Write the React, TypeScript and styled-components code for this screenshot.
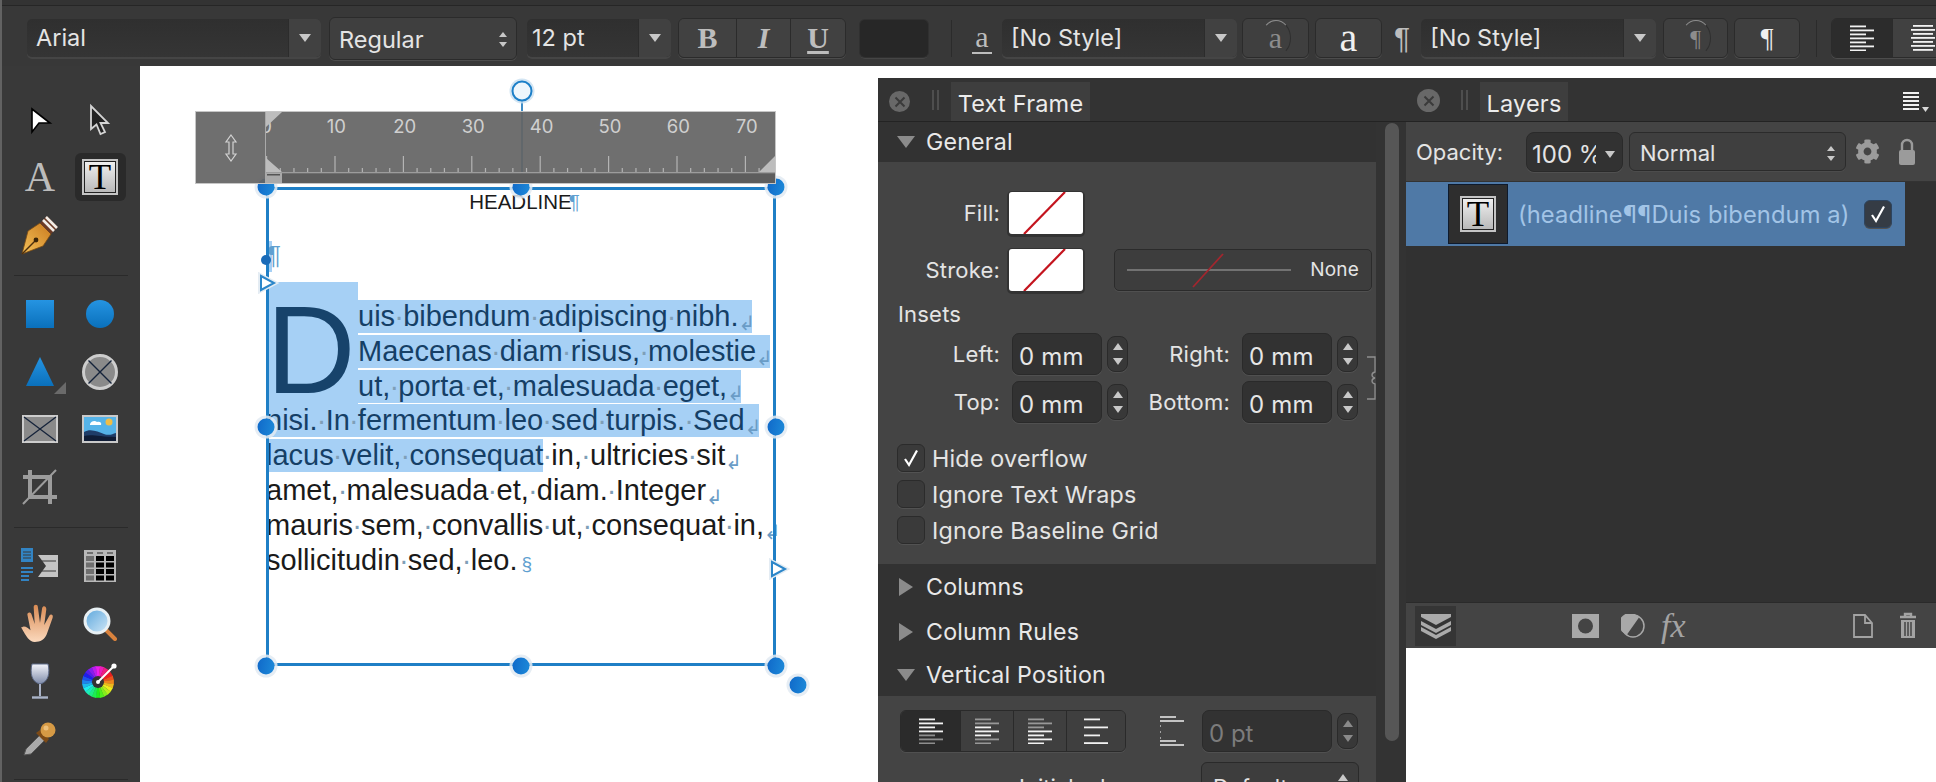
import * as React from 'react';
import styled, { createGlobalStyle } from 'styled-components';
import { FaCog } from 'react-icons/fa';

const GlobalStyle = createGlobalStyle`
  html, body {
    margin: 0;
    padding: 0;
    height: 100%;
    overflow: hidden;
    background: #fff;
  }
  * { box-sizing: border-box; }
`;

const UI_FONT = `Inter, "Noto Sans", "Liberation Sans", sans-serif`;
const ARIAL = `"Liberation Sans", Arial, sans-serif`;
const SERIF = `"Liberation Serif", "Times New Roman", serif`;

const Page = styled.div`
  width: 1936px;
  height: 782px;
  display: flex;
  flex-direction: column;
  overflow: hidden;
  border-left: 2px solid #626262;
  font-family: ${UI_FONT};
  color: #e4e4e4;
`;

/* ---------- top toolbar ---------- */

const Toolbar = styled.div`
  flex: 0 0 66px;
  display: flex;
  align-items: center;
  padding: 5px 0 0 25px;
  background: #383838;
  border-top: 5px solid #333;
  box-shadow: inset 0 1px 0 #262626;
  overflow: hidden;
  font-size: 23.5px;
`;

const Field = styled.div<{ $w: number; $ml?: number }>`
  flex: 0 0 ${p => p.$w}px;
  height: 38px;
  margin-left: ${p => p.$ml ?? 0}px;
  display: flex;
  align-items: stretch;
  background: linear-gradient(#2f2f2f, #353535);
  border-radius: 5px;
  box-shadow: 0 2px 0 #454545;
  overflow: hidden;
`;

const FieldText = styled.span<{ $pad?: number }>`
  flex: 1;
  padding: 2px 0 0 ${p => p.$pad ?? 9}px;
  line-height: 34px;
  white-space: nowrap;
`;

const Caret = styled.span`
  flex: 0 0 33px;
  display: flex;
  align-items: center;
  justify-content: center;
  background: #414141;
  border-left: 1px solid #2c2c2c;
`;

const Tri = styled.i<{ $dir: 'up' | 'down' | 'right'; $s: number; $c?: string }>`
  display: block;
  width: 0;
  height: 0;
  border-style: solid;
  border-color: transparent;
  ${p =>
    p.$dir === 'right'
      ? `border-width: ${p.$s}px 0 ${p.$s}px ${p.$s * 1.6}px; border-left-color: ${p.$c ?? '#c8c8c8'};`
      : p.$dir === 'up'
      ? `border-width: 0 ${p.$s}px ${p.$s * 1.4}px; border-bottom-color: ${p.$c ?? '#c8c8c8'};`
      : `border-width: ${p.$s * 1.4}px ${p.$s}px 0; border-top-color: ${p.$c ?? '#c8c8c8'};`}
`;

const SelectBox = styled.div<{ $w: number; $ml?: number }>`
  flex: 0 0 ${p => p.$w}px;
  height: 43px;
  margin-left: ${p => p.$ml ?? 0}px;
  display: flex;
  align-items: center;
  justify-content: space-between;
  padding: 2px 9px 0 9px;
  background: #3f3f3f;
  border: 1px solid #2b2b2b;
  border-radius: 6px;
  box-shadow: 0 1px 0 #4c4c4c;
  white-space: nowrap;
`;

const UpDown = styled.span`
  display: flex;
  flex-direction: column;
  gap: 5px;
`;

const BtnGroup = styled.div<{ $ml: number }>`
  display: flex;
  height: 40px;
  margin-left: ${p => p.$ml}px;
  border: 1px solid #2b2b2b;
  border-radius: 6px;
  box-shadow: 0 1px 0 #4c4c4c;
  overflow: hidden;
  flex: none;
`;

const GroupBtn = styled.span<{ $w: number; $on?: boolean; $font?: string }>`
  flex: 0 0 ${p => p.$w}px;
  display: flex;
  align-items: center;
  justify-content: center;
  background: ${p => (p.$on ? '#2c2c2c' : '#414141')};
  & + & { border-left: 1px solid #2b2b2b; }
  font-family: ${p => p.$font ?? UI_FONT};
`;

const StyleLetter = styled.span<{ $b?: boolean; $i?: boolean; $u?: boolean }>`
  font-size: 30px;
  color: #bdbdbd;
  font-weight: ${p => (p.$b ? 700 : 400)};
  font-style: ${p => (p.$i ? 'italic' : 'normal')};
  text-decoration: ${p => (p.$u ? 'underline' : 'none')};
  text-underline-offset: 3px;
`;

const ColorWell = styled.div`
  flex: 0 0 68px;
  height: 37px;
  margin-left: 14px;
  background: #272727;
  border-radius: 5px;
  box-shadow: 0 0 0 1px #303030, 0 2px 0 #454545;
`;

const VRule = styled.div<{ $ml: number }>`
  flex: 0 0 1px;
  height: 37px;
  margin-left: ${p => p.$ml}px;
  background: #2b2b2b;
`;

const ToolGlyph = styled.span<{ $ml: number; $w: number; $size: number; $u?: boolean; $font?: string; $c?: string }>`
  flex: 0 0 ${p => p.$w}px;
  margin-left: ${p => p.$ml}px;
  text-align: center;
  font-family: ${p => p.$font ?? SERIF};
  font-size: ${p => p.$size}px;
  line-height: 1;
  color: ${p => p.$c ?? '#bdbdbd'};
  border-bottom: ${p => (p.$u ? '2px solid #bdbdbd' : 'none')};
`;

const StyleBtn = styled.div<{ $w: number; $ml: number }>`
  flex: 0 0 ${p => p.$w}px;
  height: 40px;
  margin-left: ${p => p.$ml}px;
  display: flex;
  align-items: center;
  justify-content: center;
  position: relative;
  background: #3f3f3f;
  border: 1px solid #2b2b2b;
  border-radius: 6px;
  box-shadow: 0 1px 0 #4c4c4c;
  font-family: ${SERIF};
`;

const ClearMark = styled.span<{ $size: number; $dim?: boolean }>`
  font-size: ${p => p.$size}px;
  line-height: 1;
  color: ${p => (p.$dim ? '#8d8d8d' : '#f0f0f0')};
`;

const ClearRing = styled.span`
  position: absolute;
  left: 50%;
  top: 50%;
  width: 30px;
  height: 36px;
  transform: translate(-50%, -50%);
  border-radius: 50%;
  border: 1px solid transparent;
  border-top-color: #8d8d8d;
  border-right-color: #2f2f2f;
`;

/* ---------- main ---------- */

const Main = styled.div`
  flex: 1;
  display: flex;
  min-height: 0;
`;

const ToolRail = styled.div`
  flex: 0 0 138px;
  padding: 25px 8px 0;
  background: #393939;
`;

const ToolGrid = styled.div`
  display: grid;
  grid-template-columns: 60px 60px;
  grid-auto-rows: 57.5px;
  justify-items: center;
  align-items: center;
`;

const RailRule = styled.div`
  height: 1px;
  margin: 11.5px 4px 9.5px;
  background: #2a2a2a;
`;

const ActiveTool = styled.div`
  width: 51px;
  height: 48px;
  display: flex;
  align-items: center;
  justify-content: center;
  background: #2a2a2a;
  border-radius: 6px;
`;

const TextToolA = styled.span`
  font-family: ${SERIF};
  font-size: 42px;
  line-height: 1;
  color: #bcbcbc;
`;

const FrameGlyph = styled.div<{ $s: number }>`
  width: ${p => p.$s}px;
  height: ${p => p.$s}px;
  display: flex;
  align-items: center;
  justify-content: center;
  border: 2px solid #c4c4c4;
  box-shadow: inset 0 0 0 1px #222;
  background: linear-gradient(#f1f1f1, #b7b7b7);
  font-family: ${SERIF};
  font-size: ${p => p.$s * 1.02}px;
  line-height: 1;
  color: #000;
`;

const Canvas = styled.div`
  flex: 1;
  display: flex;
  background: #fff;
  overflow: hidden;
`;

const Artboard = styled.div`
  flex: 0 0 738px;
  position: relative;
`;

/* ruler and text frame sit on the free canvas */

const Ruler = styled.div`
  position: absolute;
  z-index: 3;
  left: 55px;
  top: 45px;
  width: 581px;
  height: 73px;
  display: flex;
  background: rgba(100, 100, 100, 0.93);
  border: 1px solid #c6c6c6;
`;

const RulerGrip = styled.div`
  flex: 0 0 70px;
  display: flex;
  align-items: center;
  justify-content: center;
  border-right: 1px solid #a9a9a9;
`;

const Frame = styled.div`
  position: absolute;
  left: 126px;
  top: 121px;
  width: 510px;
  height: 479px;
  font-family: ${ARIAL};
  color: #1a1a1a;
`;

const FrameEdge = styled.div`
  position: absolute;
  inset: 0;
  border: 3px solid #1f7fc6;
  pointer-events: none;
`;

const Handle = styled.span<{ $x: string; $y: string }>`
  position: absolute;
  z-index: 2;
  left: ${p => p.$x};
  top: ${p => p.$y};
  width: 17px;
  height: 17px;
  transform: translate(-50%, -50%);
  border-radius: 50%;
  background: linear-gradient(100deg, #1069c9, #1d8ad9);
  box-shadow: 0 0 0 3px rgba(226, 234, 242, 0.85);
`;

const SmallDot = styled.span`
  position: absolute;
  z-index: 2;
  left: -5px;
  top: 68px;
  width: 10px;
  height: 10px;
  border-radius: 50%;
  background: #1a6bb8;
`;

const Stem = styled.div`
  position: absolute;
  left: 255px;
  top: -96px;
  width: 1.5px;
  height: 96px;
  background: #3e8cc6;
`;

const RotateRing = styled.span`
  position: absolute;
  z-index: 4;
  left: 255.5px;
  top: -96px;
  width: 21px;
  height: 21px;
  transform: translate(-50%, -50%);
  border-radius: 50%;
  border: 2.5px solid #1c7fc8;
  background: #eef6fc;
  box-shadow: 0 0 0 2px rgba(200, 222, 240, 0.8);
`;

const Port = styled.svg<{ $x: number; $y: number }>`
  position: absolute;
  z-index: 2;
  left: ${p => p.$x}px;
  top: ${p => p.$y}px;
`;

const Headline = styled.div`
  height: 28px;
  padding: 1px 0 0 7px;
  text-align: center;
  font-size: 20.5px;
  line-height: 28px;
`;

const Pilcrow = styled.span`
  font-family: ${ARIAL};
  color: #5f9fd0;
`;

const HeadPilcrow = styled(Pilcrow)`
  margin-left: -3px;
`;

const EmptyPara = styled.div`
  width: 5px;
  height: 31px;
  margin: 26px 0 0 1px;
  background: #a6d0f5;
  white-space: nowrap;
  font-size: 26px;
  line-height: 28px;
`;

const Body = styled.div`
  position: relative;
  margin-top: 28px;
  font-size: 29px;
`;

const DropBack = styled.div`
  position: absolute;
  left: 0;
  top: -18px;
  width: 92px;
  height: 122px;
  background: #a6d0f5;
`;

const DropCap = styled.span`
  position: absolute;
  left: 0;
  top: -23px;
  font-size: 124px;
  line-height: 146px;
  color: #17436b;
`;

const TextLine = styled.div<{ $inset?: boolean }>`
  position: relative;
  height: 34.8px;
  line-height: 33px;
  margin-left: ${p => (p.$inset ? 92 : 0)}px;
  white-space: nowrap;
`;

const Selected = styled.span`
  display: inline-block;
  vertical-align: top;
  height: 33px;
  background: #a6d0f5;
  color: #153f66;
`;

const SpaceDot = styled.span`
  display: inline-block;
  width: 0.278em;
  text-indent: -0.03em;
  color: #7f9fb8;
`;

const ReturnMark = styled.span`
  display: inline-block;
  width: 14px;
  font-family: "DejaVu Sans", sans-serif;
  font-size: 20px;
  line-height: 1;
  vertical-align: -4px;
  color: #6a9cc6;
  text-align: center;
  white-space: nowrap;
`;

const SectionMark = styled.span`
  margin-left: 4px;
  font-size: 19px;
  color: #5f9fd0;
`;

/* ---------- panels ---------- */

const Dock = styled.div`
  flex: 1;
  display: flex;
  align-items: flex-start;
  padding-top: 12px;
  min-width: 0;
`;

const Panel = styled.div<{ $w: number; $h: number }>`
  flex: 0 0 ${p => p.$w}px;
  height: ${p => p.$h}px;
  display: flex;
  flex-direction: column;
  background: #444;
  overflow: hidden;
`;

const TabBar = styled.div`
  flex: 0 0 44px;
  display: flex;
  align-items: flex-end;
  background: #333;
  border-bottom: 1px solid #232323;
  position: relative;
`;

const CloseBtn = styled.span<{ $d: number }>`
  flex: 0 0 auto;
  width: ${p => p.$d}px;
  height: ${p => p.$d}px;
  margin: 0 0 9px 11px;
  display: flex;
  align-items: center;
  justify-content: center;
  border-radius: 50%;
  background: #686868;
`;

const Grip = styled.span<{ $ml: number; $mr: number }>`
  width: 7px;
  height: 20px;
  margin: 0 ${p => p.$mr}px 11px ${p => p.$ml}px;
  border-left: 2px solid #4e4e4e;
  border-right: 2px solid #4e4e4e;
`;

const Tab = styled.div<{ $w: number }>`
  flex: 0 0 ${p => p.$w}px;
  height: 39px;
  padding-top: 3px;
  text-align: center;
  line-height: 37px;
  font-size: 23.5px;
  letter-spacing: 0.2px;
  background: #3e3e3e;
  color: #ececec;
`;

const MenuIcon = styled.svg`
  position: absolute;
  right: 6px;
  top: 13px;
`;

const TextFrameLayout = styled.div`
  flex: 1;
  display: flex;
  min-height: 0;
`;

const PanelScroll = styled.div`
  flex: 0 0 30px;
  padding: 1px 7px 0 9px;
  background: #333;
`;

const ScrollThumb = styled.div`
  height: 618px;
  border-radius: 7px;
  background: #565656;
`;

const Sections = styled.div`
  flex: 1;
  min-width: 0;
`;

const SectionHead = styled.div<{ $h: number }>`
  height: ${p => p.$h}px;
  display: flex;
  align-items: center;
  padding-left: 19px;
  gap: 11px;
  background: #323232;
  font-size: 23.2px;
  letter-spacing: 0.2px;
  color: #e9e9e9;
`;

const ArrowSlot = styled.span`
  flex: 0 0 18px;
  display: flex;
  justify-content: center;
`;

const GeneralBody = styled.div`
  height: 402px;
  padding-top: 29px;
  font-size: 22px;
  letter-spacing: 0.2px;
`;

const SwatchRow = styled.div<{ $mt?: number }>`
  display: flex;
  align-items: center;
  height: 43px;
  margin-top: ${p => p.$mt ?? 0}px;
`;

const FieldLabel = styled.span<{ $w: number }>`
  flex: 0 0 ${p => p.$w}px;
  text-align: right;
  white-space: nowrap;
`;

const Swatch = styled.svg`
  flex: none;
  margin-left: 9px;
  border-radius: 3px;
  box-shadow: 0 1px 0 2px #333;
`;

const LineStyle = styled.div`
  flex: 0 0 258px;
  height: 42px;
  margin-left: 31px;
  display: flex;
  align-items: center;
  justify-content: space-between;
  padding-right: 12px;
  background: #3d3d3d;
  border: 1px solid #2b2b2b;
  border-radius: 5px;
  box-shadow: 0 1px 0 #505050;
  font-size: 19px;
`;

const InsetsTitle = styled.div`
  margin: 10px 0 6px 20px;
  line-height: 26px;
`;

const InsetGrid = styled.div`
  display: grid;
  grid-template-columns: 134px 90px 26px 114px 90px 26px 18px;
  grid-auto-rows: 42px;
  row-gap: 6px;
  align-items: center;
`;

const InsetLabel = styled.span`
  padding-right: 12px;
  text-align: right;
  white-space: nowrap;
`;

const NumField = styled.div<{ $dim?: boolean; $w?: number; $ml?: number }>`
  width: ${p => (p.$w ? `${p.$w}px` : 'auto')};
  height: 42px;
  margin-left: ${p => p.$ml ?? 0}px;
  padding: 4px 0 0 6px;
  line-height: 38px;
  font-size: 24px;
  flex: none;
  background: #323232;
  border: 1px solid #2a2a2a;
  border-radius: 7px;
  box-shadow: 0 1px 0 #505050;
  color: ${p => (p.$dim ? '#7c7c7c' : '#e6e6e6')};
`;

const Stepper = styled.div`
  width: 21px;
  height: 36px;
  margin-left: 5px;
  flex: none;
  display: flex;
  flex-direction: column;
  align-items: center;
  justify-content: center;
  gap: 8px;
  background: #383838;
  border: 1px solid #2a2a2a;
  border-radius: 8px;
  box-shadow: 0 1px 0 #505050;
`;

const LinkBracket = styled.svg`
  grid-column: 7;
  grid-row: 1 / span 2;
  justify-self: end;
`;

const Checks = styled.div`
  display: flex;
  flex-direction: column;
  gap: 8px;
  margin: 21px 0 0 19px;
`;

const CheckRow = styled.label`
  display: flex;
  align-items: center;
  gap: 7px;
  height: 28px;
  font-size: 23.3px;
`;

const CheckBox = styled.span<{ $blue?: boolean }>`
  flex: none;
  width: 28px;
  height: 28px;
  display: flex;
  align-items: center;
  justify-content: center;
  background: ${p => (p.$blue ? '#353c45' : '#3a3a3a')};
  border: 1px solid ${p => (p.$blue ? '#2c4460' : '#2b2b2b')};
  border-radius: 6px;
  box-shadow: 0 1px 0 #525252;
`;

const VPosRow = styled.div`
  display: flex;
  align-items: center;
  height: 42px;
  margin: 14px 0 0 22px;
`;

const SegGroup = styled.div`
  flex: 0 0 226px;
  height: 42px;
  display: flex;
  overflow: hidden;
  border: 1px solid #2a2a2a;
  border-radius: 6px;
  box-shadow: 0 1px 0 #505050;
`;

const Seg = styled.span<{ $w: number; $on?: boolean }>`
  flex: ${p => (p.$w ? `0 0 ${p.$w}px` : 1)};
  display: flex;
  align-items: center;
  justify-content: center;
  background: ${p => (p.$on ? '#2b2b2b' : '#3f3f3f')};
  & + & { border-left: 1px solid #2a2a2a; }
`;

const BaselineGlyph = styled.svg`
  flex: none;
  margin-left: 34px;
`;

const AdvanceRow = styled.div`
  display: flex;
  align-items: flex-start;
  margin: 10px 0 0 0;
  font-size: 22px;
`;

const AdvanceLabel = styled.span`
  flex: 0 0 297px;
  text-align: right;
  padding-top: 12px;
`;

const AdvanceSelect = styled.div`
  flex: 0 0 158px;
  height: 42px;
  margin-left: 26px;
  display: flex;
  justify-content: space-between;
  padding: 11px 10px 0 11px;
  background: #3d3d3d;
  border: 1px solid #2a2a2a;
  border-radius: 6px;
  font-size: 22px;
`;

const OpacityRow = styled.div`
  flex: 0 0 60px;
  display: flex;
  align-items: center;
  padding-left: 10px;
  border-bottom: 1px solid #333;
  font-size: 22px;
`;

const OpacityLabel = styled.span`
  flex: 0 0 110px;
`;

const OpacityField = styled.div`
  flex: 0 0 97px;
  height: 40px;
  display: flex;
  align-items: center;
  justify-content: space-between;
  padding: 6px 7px 0 5px;
  background: #323232;
  border: 1px solid #2a2a2a;
  border-radius: 8px;
  box-shadow: 0 1px 0 #505050;
  font-size: 24px;
  white-space: nowrap;
`;

const OpacityValue = styled.span`
  flex: 0 0 64px;
  overflow: hidden;
`;

const BlendSelect = styled(SelectBox)`
  height: 39px;
  font-size: 22px;
  padding: 3px 10px 0 10px;
`;

const GearSlot = styled.span`
  flex: 0 0 auto;
  display: flex;
  margin-left: 9px;
  color: #9b9b9b;
`;

const LockIcon = styled.svg`
  flex: none;
  margin-left: 18px;
`;

const LayerList = styled.div`
  flex: 1;
  background: #313131;
  padding-right: 31px;
`;

const LayerRow = styled.div`
  height: 64px;
  display: flex;
  align-items: center;
  padding-left: 42px;
  background: #4f79a6;
`;

const Thumb = styled.div`
  flex: 0 0 60px;
  height: 60px;
  display: flex;
  align-items: center;
  justify-content: center;
  background: #2e2e2e;
  border: 1px solid #0e1a2c;
`;

const LayerName = styled.span`
  flex: 1;
  margin-left: 10px;
  font-size: 23.7px;
  letter-spacing: 0.1px;
  color: #a2c4e6;
  white-space: nowrap;
`;

const LayerCheck = styled(CheckBox)`
  margin-right: 13px;
`;

const PanelFooter = styled.div`
  flex: 0 0 46px;
  display: flex;
  align-items: center;
  padding: 0 0 0 9px;
  background: #444;
  border-top: 1px solid #2a2a2a;
  color: #a3a3a3;
`;

const LayerStackBtn = styled.div`
  flex: 0 0 41px;
  height: 40px;
  display: flex;
  align-items: center;
  justify-content: center;
  background: #353535;
`;

const FooterFx = styled.span`
  flex: 0 0 27px;
  margin-left: 16px;
  font-family: ${SERIF};
  font-style: italic;
  font-size: 34px;
  line-height: 1;
  white-space: nowrap;
`;

const FooterIcon = styled.svg<{ $ml: number }>`
  flex: none;
  margin-left: ${p => p.$ml}px;
`;

/* ---------- drawings ---------- */

const Cross = () => (
  <svg width="12" height="12" viewBox="0 0 12 12">
    <path d="M1.5 1.5l9 9M10.5 1.5l-9 9" stroke="#3a3a3a" strokeWidth="2" />
  </svg>
);

const Tick = ({ s = 20 }: { s?: number }) => (
  <svg width={s} height={s} viewBox="0 0 20 20">
    <path d="M4 11l4 6L16 2.5" fill="none" stroke="#fff" strokeWidth="2.2" />
  </svg>
);

type Bar = [number, number, number];

const AlignIcon = ({ bars, w = 24, h = 26 }: { bars: Bar[]; w?: number; h?: number }) => (
  <svg width={w} height={h} viewBox={`0 0 ${w} ${h}`}>
    {bars.map(([y, len, op], i) => (
      <rect key={i} x={0} y={y} width={len} height={1.8} fill="#f2f2f2" opacity={op} />
    ))}
  </svg>
);

const seven = (ops: number[]): Bar[] =>
  ops.map((op, i) => [i * 4 + 0.5, i % 2 === 0 ? 16 : 24, op] as Bar);

const CenterLines = () => (
  <svg width="24" height="26" viewBox="0 0 24 26">
    {[0, 4, 8, 12, 16, 20, 24].map((y, i) => (
      <rect key={y} x={i % 2 === 0 ? 2 : 0} y={y} width={i % 2 === 0 ? 20 : 24} height="1.8" fill="#f2f2f2" />
    ))}
  </svg>
);

const SelectArrow = () => (
  <svg width="36" height="36" viewBox="0 0 36 36">
    <path d="M10 7v23l7-9h11z" fill="#fff" stroke="#000" strokeWidth="1.600" />
  </svg>
);

const NodeArrow = () => (
  <svg width="36" height="36" viewBox="0 0 36 36">
    <path d="M9 4v23l5.500-4.500 4 9.500 4.500-2-4.500-9H26z" fill="#222" stroke="#d4d4d4" strokeWidth="1.8" />
  </svg>
);

const PenNib = () => (
  <svg width="44" height="44" viewBox="0 0 44 44">
    <defs>
      <linearGradient id="nib" x1="0" y1="1" x2="1" y2="0">
        <stop offset="0" stopColor="#f5c25a" />
        <stop offset="1" stopColor="#c97a1e" />
      </linearGradient>
    </defs>
    <path d="M4 41l6-23 12-8 11 11-8 12z" fill="url(#nib)" stroke="#7a4a12" strokeWidth="0.8" />
    <path d="M4 41l13-13" stroke="#4d2f0c" strokeWidth="1.4" />
    <circle cx="18" cy="27" r="2.4" fill="#3a2408" />
    <path d="M22 10l7-7 11 11-7 7z" fill="#6b3a26" />
    <path d="M25 7l11 11M28 4l11 11" stroke="#f1ece6" strokeWidth="2.6" />
  </svg>
);

const BlueGrad = ({ id }: { id: string }) => (
  <defs>
    <linearGradient id={id} x1="0" y1="0" x2="0" y2="1">
      <stop offset="0" stopColor="#2594e2" />
      <stop offset="1" stopColor="#0a70bb" />
    </linearGradient>
  </defs>
);

const RectShape = () => (
  <svg width="28" height="28" viewBox="0 0 28 28">
    <BlueGrad id="sq" />
    <rect width="28" height="28" fill="url(#sq)" />
  </svg>
);

const CircleShape = () => (
  <svg width="28" height="28" viewBox="0 0 28 28">
    <BlueGrad id="ci" />
    <circle cx="14" cy="14" r="14" fill="url(#ci)" />
  </svg>
);

const TriShape = () => (
  <svg width="52" height="44" viewBox="0 0 52 44">
    <BlueGrad id="tr" />
    <path d="M26 7l14 29H12z" fill="url(#tr)" />
    <path d="M52 32v12H40z" fill="#6a6a6a" />
  </svg>
);

const EllipseFrame = () => (
  <svg width="38" height="38" viewBox="0 0 38 38">
    <circle cx="19" cy="19" r="16.500" fill="#8a8a8a" stroke="#cdcdcd" strokeWidth="3" />
    <path d="M7.500 7.500l23 23M30.500 7.500l-23 23" stroke="#15233a" strokeWidth="1.4" />
  </svg>
);

const PictureFrame = () => (
  <svg width="36" height="28" viewBox="0 0 36 28">
    <rect x="1" y="1" width="34" height="26" fill="#8a8a8a" stroke="#cdcdcd" strokeWidth="2" />
    <path d="M2 2l32 24M34 2L2 26" stroke="#15233a" strokeWidth="1.3" />
  </svg>
);

const PictureTool = () => (
  <svg width="36" height="28" viewBox="0 0 36 28">
    <rect width="36" height="28" fill="#c9c9c9" />
    <rect x="2" y="2" width="32" height="24" fill="#55b3e8" />
    <circle cx="27" cy="7" r="3.500" fill="#f0bd45" />
    <path d="M8 9c1-3 5-4 7-2 3-1 5 1 4 3H8z" fill="#fff" />
    <path d="M2 17c7-4 14 0 20 2s8 0 12-1v8H2z" fill="#1f3d68" />
    <path d="M2 21c8-2 16 1 32 1v4H2z" fill="#101d36" />
  </svg>
);

const CropTool = () => (
  <svg width="36" height="36" viewBox="0 0 36 36">
    <path d="M8 1v27h27M1 8h27v27" fill="none" stroke="#9c9c9c" strokeWidth="4" />
    <path d="M1 35L34 1" stroke="#9c9c9c" strokeWidth="2" />
  </svg>
);

const FrameTextTool = () => (
  <svg width="40" height="36" viewBox="0 0 40 36">
    <rect x="1" y="0" width="12" height="14" fill="#3284c4" />
    <path d="M3 4h8M3 7h8M3 10h8" stroke="#393939" strokeWidth="1.2" />
    <path d="M1 20h12M1 24h12M1 28h8M1 32h8" stroke="#3284c4" strokeWidth="2" />
    <path d="M18 7h20v22H18l8-11z" fill="#c4c4c4" />
    <path d="M22 13h14M22 23h14" stroke="#393939" strokeWidth="1" />
  </svg>
);

const TableTool = () => (
  <svg width="32" height="32" viewBox="0 0 32 32">
    <rect width="32" height="32" fill="#b8b8b8" />
    {[0, 1, 2, 3].map(r => [0, 1, 2].map(c => (
      <rect
        key={`${r}${c}`}
        x={2 + c * 10}
        y={6 + r * 6.500}
        width="8"
        height="5"
        fill={c === 0 ? '#6f6f6f' : '#000'}
      />
    )))}
    <path d="M3 3h6M13 3h6M23 3h6" stroke="#6f6f6f" strokeWidth="2" />
  </svg>
);

const HandTool = () => (
  <svg width="40" height="40" viewBox="0 0 36 38">
    <defs>
      <linearGradient id="skin" x1="0" y1="0" x2="0" y2="1">
        <stop offset="0" stopColor="#d98a52" />
        <stop offset="1" stopColor="#fbd9bd" />
      </linearGradient>
    </defs>
    <path
      d="M1 22c2-2 6 1 8 3L6 10c0-2 3-3 4 0l3 9-1-16c0-3 4-3 4 0l2 15 2-14c1-3 4-2 4 1l-2 15 5-9c1-2 4-1 3 2l-5 14c-2 7-7 9-12 9s-8-5-13-14z"
      fill="url(#skin)"
    />
  </svg>
);

const ZoomTool = () => (
  <svg width="34" height="34" viewBox="0 0 34 34">
    <defs>
      <linearGradient id="lens" x1="0" y1="0" x2="1" y2="1">
        <stop offset="0" stopColor="#5ba6dc" />
        <stop offset="1" stopColor="#d2e8f7" />
      </linearGradient>
    </defs>
    <path d="M22 22l10 10" stroke="#d9823d" strokeWidth="4" strokeLinecap="round" />
    <circle cx="14" cy="14" r="12" fill="url(#lens)" stroke="#e8f0f4" strokeWidth="3" />
  </svg>
);

const WineTool = () => (
  <svg width="20" height="36" viewBox="0 0 20 36">
    <defs>
      <linearGradient id="glass" x1="0" y1="0" x2="0" y2="1">
        <stop offset="0" stopColor="#f4f5fb" />
        <stop offset="1" stopColor="#7d8aa8" />
      </linearGradient>
    </defs>
    <path d="M2 1h16c2 8 1 18-8 20C1 19 0 9 2 1z" fill="url(#glass)" stroke="#5d6a88" />
    <path d="M10 21v12" stroke="#aab3c8" strokeWidth="2" />
    <path d="M2 34.500h16" stroke="#aab3c8" strokeWidth="2.400" />
  </svg>
);

const WHEEL = Array.from({ length: 24 }, (_, i) => i * 15);

const wedge = (deg: number) => {
  const a = ((deg - 98) * Math.PI) / 180;
  const b = ((deg - 82) * Math.PI) / 180;
  const p = (t: number) => `${16 + 16 * Math.cos(t)} ${20 + 16 * Math.sin(t)}`;
  return `M16 20L${p(a)}L${p(b)}Z`;
};

const WheelTool = () => (
  <svg width="36" height="38" viewBox="0 0 36 38">
    {WHEEL.map(d => (
      <path key={d} d={wedge(d + 60)} fill={`hsl(${d},85%,52%)`} />
    ))}
    <circle cx="16" cy="20" r="6" fill="#333" />
    <path d="M16 20L32 4" stroke="#fff" strokeWidth="2" />
    <circle cx="32" cy="4" r="2.600" fill="#fff" />
    <circle cx="16" cy="20" r="2" fill="#fff" />
  </svg>
);

const DropperTool = () => (
  <svg width="36" height="36" viewBox="0 0 36 36">
    <path d="M2 34l2-6 14-14 5 5-14 14z" fill="#aaa" stroke="#555" />
    <path d="M14 12l10 10 3-4-9-9z" fill="#7d4a16" />
    <circle cx="26" cy="9" r="7.500" fill="#d69a45" />
    <circle cx="24" cy="7" r="2.500" fill="#edc07a" />
  </svg>
);

const UpDownArrow = () => (
  <svg width="14" height="28" viewBox="0 0 14 28">
    <path
      d="M7 1L12 8H9v12h3l-5 7-5-7h3V8H2z"
      fill="none"
      stroke="#d2d2d2"
      strokeWidth="1.2"
    />
  </svg>
);

const RULER_LABELS = [10, 20, 30, 40, 50, 60, 70];
const RULER_TICKS = Array.from({ length: 37 }, (_, i) => i);

const RulerScale = () => (
  <svg width="509" height="71" viewBox="0 0 509 71" style={{ display: 'block', flex: 1 }}>
    <text x="0" y="21" textAnchor="middle" fontFamily={UI_FONT} fontSize="18.5" fill="#cfcfcf">0</text>
    {RULER_LABELS.map(n => (
      <text key={n} x={n * 6.84 + 2} y="21" textAnchor="middle" fontFamily={UI_FONT} fontSize="18.5" fill="#cfcfcf">
        {n}
      </text>
    ))}
    {RULER_TICKS.map(i => (
      <rect
        key={i}
        x={i * 13.68}
        y={i % 5 === 0 ? 44 : 56}
        width="1.200"
        height={i % 5 === 0 ? 16 : 4}
        fill="#b4b4b4"
      />
    ))}
    <rect x="0" y="60" width="509" height="1.500" fill="#9c9c9c" />
    <rect x="0" y="61.500" width="509" height="10" fill="#5d5d5d" />
    <path d="M0 0h16L0 15zM0 46l16 14H0zM493 60l16-16v16z" fill="#bdbdbd" />
    <rect x="0" y="61" width="16" height="10" fill="#a9a9a9" />
    <rect x="1" y="62" width="13" height="1.500" fill="#555" />
  </svg>
);

const NoFill = () => (
  <Swatch width="74" height="42" viewBox="0 0 74 42">
    <rect width="74" height="42" fill="#fff" />
    <path d="M15 42L56 0" stroke="#c4141e" strokeWidth="2.200" />
  </Swatch>
);

const LinkShape = () => (
  <LinkBracket width="9" height="44" viewBox="0 0 9 44">
    <path d="M0 1h8v15c-4 1-4 5 0 6v0c-4 1-4 5 0 6v15H0" fill="none" stroke="#8f8f8f" strokeWidth="1.300" />
  </LinkBracket>
);

const Spin = ({ dim }: { dim?: boolean }) => (
  <Stepper>
    <Tri $dir="up" $s={5} $c={dim ? '#8a8a8a' : '#c8c8c8'} />
    <Tri $dir="down" $s={5} $c={dim ? '#8a8a8a' : '#c8c8c8'} />
  </Stepper>
);

const PortMark = ({ x, y }: { x: number; y: number }) => (
  <Port $x={x} $y={y} width="22" height="22" viewBox="0 0 22 22">
    <path d="M3 3l15 8-15 8z" fill="#fff" stroke="#e4ecf3" strokeWidth="4" />
    <path d="M4 4l13 7-13 7z" fill="#fff" stroke="#2c86c9" strokeWidth="2" />
  </Port>
);

const Words = ({ text }: { text: string }) => (
  <>
    {text.split(' ').map((w, i) => (
      <React.Fragment key={i}>
        {i > 0 && <SpaceDot>·</SpaceDot>}
        {w}
      </React.Fragment>
    ))}
  </>
);

const INSETS = [
  ['Left:', 'Right:'],
  ['Top:', 'Bottom:']
];

const VPOS: { w: number; on?: boolean; bars: Bar[] }[] = [
  { w: 59, on: true, bars: seven([1, 1, 1, 1, 0.5, 0.5, 0.5]) },
  { w: 53, bars: seven([0.5, 0.5, 1, 1, 1, 0.5, 0.5]) },
  { w: 53, bars: seven([0.5, 0.5, 0.5, 1, 1, 1, 1]) },
  { w: 0, bars: [[0.5, 16, 1], [8.5, 24, 1], [16.5, 16, 1], [24.2, 24, 1]] }
];

export default function App() {
  return (
    <>
      <GlobalStyle />
      <Page>
        <Toolbar>
          <Field $w={294}>
            <FieldText>Arial</FieldText>
            <Caret><Tri $dir="down" $s={6} /></Caret>
          </Field>
          <SelectBox $w={188} $ml={8}>
            Regular
            <UpDown>
              <Tri $dir="up" $s={4} />
              <Tri $dir="down" $s={4} />
            </UpDown>
          </SelectBox>
          <Field $w={144} $ml={10}>
            <FieldText $pad={5}>12 pt</FieldText>
            <Caret><Tri $dir="down" $s={6} /></Caret>
          </Field>
          <BtnGroup $ml={7}>
            <GroupBtn $w={57} $font={SERIF}><StyleLetter $b>B</StyleLetter></GroupBtn>
            <GroupBtn $w={54} $font={SERIF}><StyleLetter $b $i>I</StyleLetter></GroupBtn>
            <GroupBtn $w={55} $font={SERIF}><StyleLetter $b $u>U</StyleLetter></GroupBtn>
          </BtnGroup>
          <ColorWell />
          <VRule $ml={23} />
          <ToolGlyph $ml={20} $w={20} $size={30} $u>a</ToolGlyph>
          <Field $w={235} $ml={10}>
            <FieldText>[No Style]</FieldText>
            <Caret><Tri $dir="down" $s={6} /></Caret>
          </Field>
          <StyleBtn $w={67} $ml={5}>
            <ClearMark $size={30} $dim>a</ClearMark>
            <ClearRing />
          </StyleBtn>
          <StyleBtn $w={67} $ml={6}><ClearMark $size={40}>a</ClearMark></StyleBtn>
          <ToolGlyph $ml={12} $w={16} $size={30} $font={ARIAL}>¶</ToolGlyph>
          <Field $w={235} $ml={11}>
            <FieldText>[No Style]</FieldText>
            <Caret><Tri $dir="down" $s={6} /></Caret>
          </Field>
          <StyleBtn $w={65} $ml={7}>
            <ClearMark $size={24} $dim>¶</ClearMark>
            <ClearRing />
          </StyleBtn>
          <StyleBtn $w={66} $ml={6}><ClearMark $size={28}>¶</ClearMark></StyleBtn>
          <VRule $ml={16} />
          <BtnGroup $ml={14}>
            <GroupBtn $w={60} $on><AlignIcon bars={seven([1, 1, 1, 1, 1, 1, 1])} /></GroupBtn>
            <GroupBtn $w={60}><CenterLines /></GroupBtn>
          </BtnGroup>
        </Toolbar>
        <Main>
          <ToolRail>
            <ToolGrid>
              <SelectArrow />
              <NodeArrow />
              <TextToolA>A</TextToolA>
              <ActiveTool><FrameGlyph $s={36}>T</FrameGlyph></ActiveTool>
              <PenNib />
            </ToolGrid>
            <RailRule />
            <ToolGrid>
              <RectShape />
              <CircleShape />
              <TriShape />
              <EllipseFrame />
              <PictureFrame />
              <PictureTool />
              <CropTool />
            </ToolGrid>
            <RailRule />
            <ToolGrid>
              <FrameTextTool />
              <TableTool />
              <HandTool />
              <ZoomTool />
              <WineTool />
              <WheelTool />
              <DropperTool />
            </ToolGrid>
            <RailRule />
          </ToolRail>
          <Canvas>
            <Artboard>
              <Frame>
                <Headline>HEADLINE<HeadPilcrow>¶</HeadPilcrow></Headline>
                <EmptyPara><Pilcrow>¶</Pilcrow></EmptyPara>
                <Body>
                  <DropBack />
                  <DropCap>D</DropCap>
                  <TextLine $inset>
                    <Selected>
                      <Words text="uis bibendum adipiscing nibh." />
                      <ReturnMark>↲</ReturnMark>
                    </Selected>
                  </TextLine>
                  <TextLine $inset>
                    <Selected>
                      <Words text="Maecenas diam risus, molestie" />
                      <ReturnMark>↲</ReturnMark>
                    </Selected>
                  </TextLine>
                  <TextLine $inset>
                    <Selected>
                      <Words text="ut, porta et, malesuada eget," />
                      <ReturnMark>↲</ReturnMark>
                    </Selected>
                  </TextLine>
                  <TextLine>
                    <Selected>
                      <Words text="nisi. In fermentum leo sed turpis. Sed" />
                      <ReturnMark>↲</ReturnMark>
                    </Selected>
                  </TextLine>
                  <TextLine>
                    <Selected><Words text="lacus velit, consequat" /></Selected>
                    <SpaceDot>·</SpaceDot>
                    <Words text="in, ultricies sit" />
                    <ReturnMark>↲</ReturnMark>
                  </TextLine>
                  <TextLine>
                    <Words text="amet, malesuada et, diam. Integer" />
                    <ReturnMark>↲</ReturnMark>
                  </TextLine>
                  <TextLine>
                    <Words text="mauris sem, convallis ut, consequat in," />
                    <ReturnMark>↲</ReturnMark>
                  </TextLine>
                  <TextLine>
                    <Words text="sollicitudin sed, leo." />
                    <SectionMark>§</SectionMark>
                  </TextLine>
                </Body>
                <FrameEdge />
                <Stem />
                <RotateRing />
                <SmallDot />
                <Handle $x="0" $y="0" />
                <Handle $x="50%" $y="0" />
                <Handle $x="100%" $y="0" />
                <Handle $x="0" $y="50%" />
                <Handle $x="100%" $y="50%" />
                <Handle $x="0" $y="100%" />
                <Handle $x="50%" $y="100%" />
                <Handle $x="100%" $y="100%" />
                <Handle $x="532px" $y="498px" />
                <PortMark x={-9} y={85} />
                <PortMark x={502} y={371} />
              </Frame>
              <Ruler>
                <RulerGrip><UpDownArrow /></RulerGrip>
                <RulerScale />
              </Ruler>
            </Artboard>
            <Dock>
              <Panel $w={528} $h={704}>
                <TabBar>
                  <CloseBtn $d={21}><Cross /></CloseBtn>
                  <Grip $ml={22} $mr={12} />
                  <Tab $w={139}>Text Frame</Tab>
                </TabBar>
                <TextFrameLayout>
                  <Sections>
                    <SectionHead $h={40}>
                      <ArrowSlot><Tri $dir="down" $s={9} $c="#8b8b8b" /></ArrowSlot>
                      General
                    </SectionHead>
                    <GeneralBody>
                      <SwatchRow>
                        <FieldLabel $w={122}>Fill:</FieldLabel>
                        <NoFill />
                      </SwatchRow>
                      <SwatchRow $mt={14}>
                        <FieldLabel $w={122}>Stroke:</FieldLabel>
                        <NoFill />
                        <LineStyle>
                          <svg width="186" height="40" viewBox="0 0 186 40">
                            <path d="M12 20h164" stroke="#a8a8a8" strokeWidth="1.200" />
                            <path d="M78 37L108 4" stroke="#a3262e" strokeWidth="1.800" />
                          </svg>
                          None
                        </LineStyle>
                      </SwatchRow>
                      <InsetsTitle>Insets</InsetsTitle>
                      <InsetGrid>
                        {INSETS.map(([a, b]) => (
                          <React.Fragment key={a}>
                            <InsetLabel>{a}</InsetLabel>
                            <NumField>0 mm</NumField>
                            <Spin />
                            <InsetLabel>{b}</InsetLabel>
                            <NumField>0 mm</NumField>
                            <Spin />
                          </React.Fragment>
                        ))}
                        <LinkShape />
                      </InsetGrid>
                      <Checks>
                        <CheckRow><CheckBox><Tick /></CheckBox>Hide overflow</CheckRow>
                        <CheckRow><CheckBox />Ignore Text Wraps</CheckRow>
                        <CheckRow><CheckBox />Ignore Baseline Grid</CheckRow>
                      </Checks>
                    </GeneralBody>
                    <SectionHead $h={45}>
                      <ArrowSlot><Tri $dir="right" $s={9} $c="#8b8b8b" /></ArrowSlot>
                      Columns
                    </SectionHead>
                    <SectionHead $h={45}>
                      <ArrowSlot><Tri $dir="right" $s={9} $c="#8b8b8b" /></ArrowSlot>
                      Column Rules
                    </SectionHead>
                    <SectionHead $h={42}>
                      <ArrowSlot><Tri $dir="down" $s={9} $c="#8b8b8b" /></ArrowSlot>
                      Vertical Position
                    </SectionHead>
                    <VPosRow>
                      <SegGroup>
                        {VPOS.map((s, i) => (
                          <Seg key={i} $w={s.w} $on={s.on}>
                            <AlignIcon bars={s.bars} />
                          </Seg>
                        ))}
                      </SegGroup>
                      <BaselineGlyph width="24" height="30" viewBox="0 0 24 30">
                        <path d="M0 1h16M0 5h24M0 25h16M0 29h24" stroke="#ededed" strokeWidth="1.600" />
                        <path d="M0 9v2M0 15v2M0 21v2" stroke="#bbb" strokeWidth="1.600" />
                      </BaselineGlyph>
                      <NumField $dim $w={130} $ml={18}>0 pt</NumField>
                      <Spin dim />
                    </VPosRow>
                    <AdvanceRow>
                      <AdvanceLabel>Initial advance:</AdvanceLabel>
                      <AdvanceSelect>
                        Default
                        <UpDown>
                          <Tri $dir="up" $s={5} />
                        </UpDown>
                      </AdvanceSelect>
                    </AdvanceRow>
                  </Sections>
                  <PanelScroll><ScrollThumb /></PanelScroll>
                </TextFrameLayout>
              </Panel>
              <Panel $w={530} $h={570}>
                <TabBar>
                  <CloseBtn $d={23}><Cross /></CloseBtn>
                  <Grip $ml={21} $mr={12} />
                  <Tab $w={88}>Layers</Tab>
                  <MenuIcon width="28" height="22" viewBox="0 0 28 22">
                    <path d="M1 2h16M1 6h16M1 10h16M1 14h16M1 18h16" stroke="#f0f0f0" strokeWidth="1.800" />
                    <path d="M20 16h7l-3.500 5z" fill="#d8d8d8" />
                  </MenuIcon>
                </TabBar>
                <OpacityRow>
                  <OpacityLabel>Opacity:</OpacityLabel>
                  <OpacityField>
                    <OpacityValue>100 %</OpacityValue>
                    <Tri $dir="down" $s={5} />
                  </OpacityField>
                  <BlendSelect $w={217} $ml={6}>
                    Normal
                    <UpDown>
                      <Tri $dir="up" $s={4} />
                      <Tri $dir="down" $s={4} />
                    </UpDown>
                  </BlendSelect>
                  <GearSlot><FaCog size={25} /></GearSlot>
                  <LockIcon width="18" height="28" viewBox="0 0 18 28">
                    <path d="M4 13V7a5 5 0 0 1 10 0v6" fill="none" stroke="#9b9b9b" strokeWidth="2.400" />
                    <rect x="1" y="12" width="16" height="15" rx="2" fill="#9b9b9b" />
                  </LockIcon>
                </OpacityRow>
                <LayerList>
                  <LayerRow>
                    <Thumb><FrameGlyph $s={36}>T</FrameGlyph></Thumb>
                    <LayerName>(headline¶¶Duis bibendum a)</LayerName>
                    <LayerCheck $blue><Tick /></LayerCheck>
                  </LayerRow>
                </LayerList>
                <PanelFooter>
                  <LayerStackBtn>
                    <svg width="32" height="26" viewBox="0 0 32 26">
                      <path d="M1 1h30v3L16 12 1 4z" fill="#aaa" />
                      <path d="M1 8l15 8 15-8v4l-15 8-15-8zM1 14l15 8 15-8v4l-15 8-15-8z" fill="#aaa" />
                    </svg>
                  </LayerStackBtn>
                  <FooterIcon $ml={116} width="27" height="24" viewBox="0 0 27 24">
                    <rect width="27" height="24" fill="#a8a8a8" />
                    <circle cx="13.500" cy="12" r="7.500" fill="#444" />
                  </FooterIcon>
                  <FooterIcon $ml={22} width="24" height="24" viewBox="0 0 24 24">
                    <circle cx="12" cy="12" r="11" fill="#444" stroke="#a8a8a8" strokeWidth="1.500" />
                    <path d="M18 3.500A11 11 0 1 0 6 20.500z" fill="#a8a8a8" />
                  </FooterIcon>
                  <FooterFx>fx</FooterFx>
                  <FooterIcon $ml={165} width="20" height="24" viewBox="0 0 20 24">
                    <path d="M1 1h11l7 8v14H1zM12 1v8h7" fill="none" stroke="#a3a3a3" strokeWidth="1.800" />
                  </FooterIcon>
                  <FooterIcon $ml={26} width="18" height="27" viewBox="0 0 18 27">
                    <path d="M1 5h16M6 4V2h6v2" stroke="#a3a3a3" strokeWidth="2.400" fill="none" />
                    <path d="M2 8h14v18H2z" fill="#a3a3a3" />
                    <path d="M6 10v14M9 10v14M12 10v14" stroke="#444" strokeWidth="1.500" />
                  </FooterIcon>
                </PanelFooter>
              </Panel>
            </Dock>
          </Canvas>
        </Main>
      </Page>
    </>
  );
}
